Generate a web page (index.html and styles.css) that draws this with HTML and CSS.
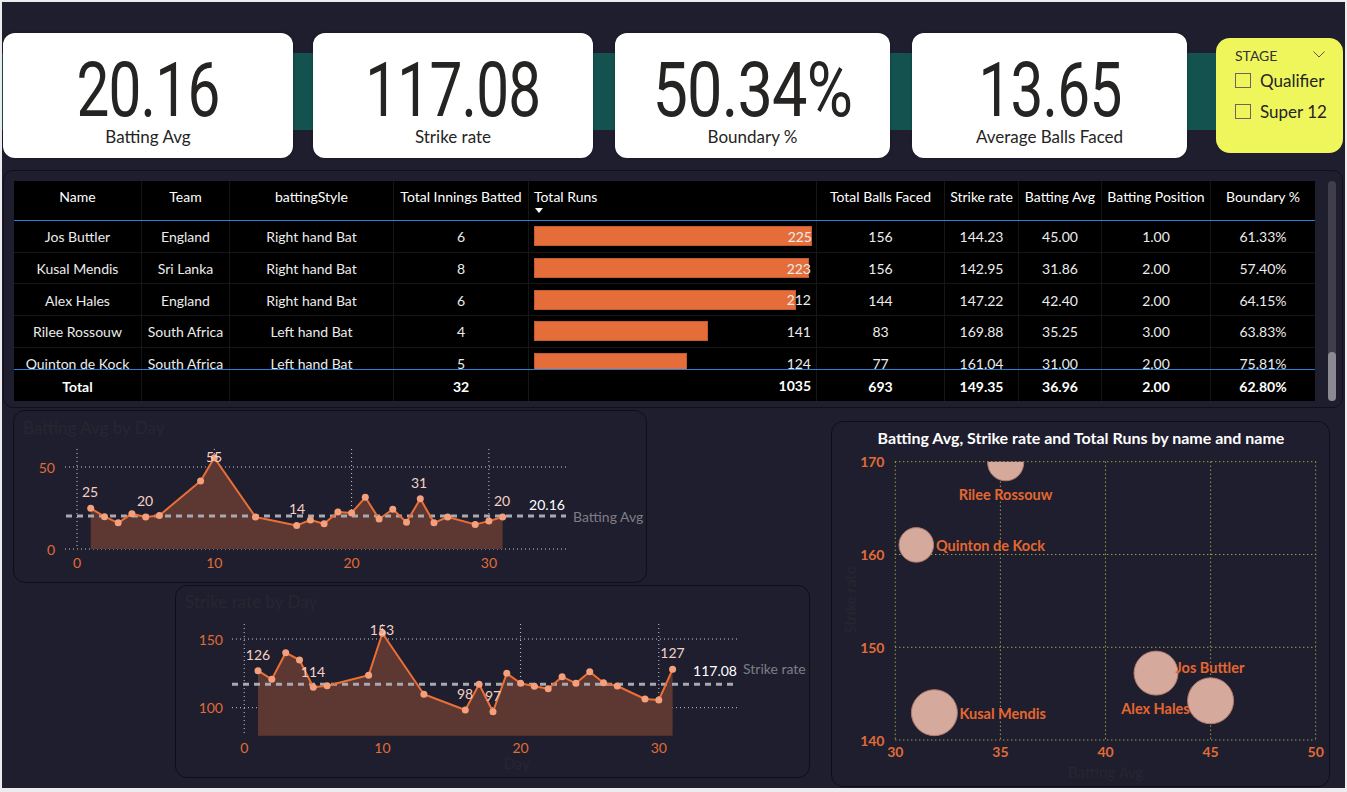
FILE: index.html
```html
<!DOCTYPE html>
<html>
<head>
<meta charset="utf-8">
<link rel="stylesheet" href="styles.css">
</head>
<body>
<div class="dash">
  <section class="kpis">
    <div class="card k1"><div class="num">20.16</div><div class="lbl">Batting Avg</div></div>
    <div class="card k2"><div class="num">117.08</div><div class="lbl">Strike rate</div></div>
    <div class="card k3"><div class="num">50.34%</div><div class="lbl">Boundary %</div></div>
    <div class="card k4"><div class="num">13.65</div><div class="lbl">Average Balls Faced</div></div>
    <div class="slicer">
      <div class="sl-head"><span>STAGE</span>
        <svg class="chev" width="12" height="7" viewBox="0 0 12 7"><path d="M0.5 0.5 L6 6 L11.5 0.5" fill="none" stroke="#555" stroke-width="1"/></svg>
      </div>
      <div class="opt"><span class="box"></span><span>Qualifier</span></div>
      <div class="opt"><span class="box"></span><span>Super 12</span></div>
    </div>
  </section>

  <section class="tpanel">
    <div class="table">
      <div class="trow head">
        <div class="c">Name</div>
        <div class="c">Team</div>
        <div class="c">battingStyle</div>
        <div class="c">Total Innings Batted</div>
        <div class="c runs-h">Total Runs<span class="sort"></span></div>
        <div class="c">Total Balls Faced</div>
        <div class="c">Strike rate</div>
        <div class="c">Batting Avg</div>
        <div class="c">Batting Position</div>
        <div class="c">Boundary %</div>
      </div>
      <div class="tbody">
        <div class="trow">
          <div class="c">Jos Buttler</div><div class="c">England</div><div class="c">Right hand Bat</div><div class="c">6</div>
          <div class="c runs"><span class="bar" style="width:278px"></span><span class="val">225</span></div>
          <div class="c">156</div><div class="c">144.23</div><div class="c">45.00</div><div class="c">1.00</div><div class="c">61.33%</div>
        </div>
        <div class="trow">
          <div class="c">Kusal Mendis</div><div class="c">Sri Lanka</div><div class="c">Right hand Bat</div><div class="c">8</div>
          <div class="c runs"><span class="bar" style="width:275px"></span><span class="val">223</span></div>
          <div class="c">156</div><div class="c">142.95</div><div class="c">31.86</div><div class="c">2.00</div><div class="c">57.40%</div>
        </div>
        <div class="trow">
          <div class="c">Alex Hales</div><div class="c">England</div><div class="c">Right hand Bat</div><div class="c">6</div>
          <div class="c runs"><span class="bar" style="width:262px"></span><span class="val">212</span></div>
          <div class="c">144</div><div class="c">147.22</div><div class="c">42.40</div><div class="c">2.00</div><div class="c">64.15%</div>
        </div>
        <div class="trow">
          <div class="c">Rilee Rossouw</div><div class="c">South Africa</div><div class="c">Left hand Bat</div><div class="c">4</div>
          <div class="c runs"><span class="bar" style="width:174px"></span><span class="val">141</span></div>
          <div class="c">83</div><div class="c">169.88</div><div class="c">35.25</div><div class="c">3.00</div><div class="c">63.83%</div>
        </div>
        <div class="trow">
          <div class="c">Quinton de Kock</div><div class="c">South Africa</div><div class="c">Left hand Bat</div><div class="c">5</div>
          <div class="c runs"><span class="bar" style="width:153px"></span><span class="val">124</span></div>
          <div class="c">77</div><div class="c">161.04</div><div class="c">31.00</div><div class="c">2.00</div><div class="c">75.81%</div>
        </div>
      </div>
      <div class="trow total">
        <div class="c">Total</div><div class="c"></div><div class="c"></div><div class="c">32</div>
        <div class="c runs"><span class="val">1035</span></div>
        <div class="c">693</div><div class="c">149.35</div><div class="c">36.96</div><div class="c">2.00</div><div class="c">62.80%</div>
      </div>
    </div>
    <div class="scroll"><div class="thumb"></div></div>
  </section>

  <section class="bottom">
    <div class="lines">
      <div class="panel p1">
        <svg class="chart" width="632" height="171" viewBox="1 1 632 171">
          <text class="ttl" x="10" y="17">Batting Avg by Day</text>
          <g class="grid">
            <line x1="52" x2="553" y1="57" y2="57"/>
            <line x1="52" x2="553" y1="139" y2="139"/>
            <line x1="64" x2="64" y1="39" y2="139"/>
            <line x1="201.3" x2="201.3" y1="39" y2="139"/>
            <line x1="338.6" x2="338.6" y1="39" y2="139"/>
            <line x1="475.9" x2="475.9" y1="39" y2="139"/>
          </g>
          <polygon class="area" points="77.7,139 77.7,98.3 91.5,106.7 105.2,112.8 118.9,103.7 132.7,107 146.4,105.4 187.6,70.9 201.3,47.7 242.5,107 283.7,115.4 297.4,110 311.1,113.7 324.9,102.1 338.6,102.9 352.3,87.3 366.1,109 379.8,99.3 393.5,112.3 407.3,88.7 421,112.8 434.7,107 462.2,114.4 475.9,111.1 489.6,107 489.6,139"/>
          <line class="avg" x1="53" x2="553" y1="105.9" y2="105.9"/>
          <polyline class="ln" points="77.7,98.3 91.5,106.7 105.2,112.8 118.9,103.7 132.7,107 146.4,105.4 187.6,70.9 201.3,47.7 242.5,107 283.7,115.4 297.4,110 311.1,113.7 324.9,102.1 338.6,102.9 352.3,87.3 366.1,109 379.8,99.3 393.5,112.3 407.3,88.7 421,112.8 434.7,107 462.2,114.4 475.9,111.1 489.6,107"/>
          <g class="pts">
            <circle cx="77.7" cy="98.3" r="3.5"/><circle cx="91.5" cy="106.7" r="3.5"/><circle cx="105.2" cy="112.8" r="3.5"/><circle cx="118.9" cy="103.7" r="3.5"/><circle cx="132.7" cy="107" r="3.5"/><circle cx="146.4" cy="105.4" r="3.5"/><circle cx="187.6" cy="70.9" r="3.5"/><circle cx="201.3" cy="47.7" r="3.5"/><circle cx="242.5" cy="107" r="3.5"/><circle cx="283.7" cy="115.4" r="3.5"/><circle cx="297.4" cy="110" r="3.5"/><circle cx="311.1" cy="113.7" r="3.5"/><circle cx="324.9" cy="102.1" r="3.5"/><circle cx="338.6" cy="102.9" r="3.5"/><circle cx="352.3" cy="87.3" r="3.5"/><circle cx="366.1" cy="109" r="3.5"/><circle cx="379.8" cy="99.3" r="3.5"/><circle cx="393.5" cy="112.3" r="3.5"/><circle cx="407.3" cy="88.7" r="3.5"/><circle cx="421" cy="112.8" r="3.5"/><circle cx="434.7" cy="107" r="3.5"/><circle cx="462.2" cy="114.4" r="3.5"/><circle cx="475.9" cy="111.1" r="3.5"/><circle cx="489.6" cy="107" r="3.5"/>
          </g>
          <g class="ylab">
            <text x="42" y="57">50</text>
            <text x="42" y="139">0</text>
          </g>
          <g class="xlab">
            <text x="64" y="152">0</text>
            <text x="201.3" y="152">10</text>
            <text x="338.6" y="152">20</text>
            <text x="475.9" y="152">30</text>
          </g>
          <g class="dlab">
            <text x="77" y="81">25</text>
            <text x="132" y="90">20</text>
            <text x="201" y="46">55</text>
            <text x="284" y="98">14</text>
            <text x="406" y="72">31</text>
            <text x="489" y="90">20</text>
          </g>
          <text class="avgv" x="534" y="94">20.16</text>
          <text class="avgn" x="560" y="106">Batting Avg</text>
        </svg>
      </div>
      <div class="panel p2">
        <svg class="chart" width="633" height="191" viewBox="1 1 633 191">
          <text class="ttl" x="10" y="16">Strike rate by Day</text>
          <g class="grid">
            <line x1="57" x2="563" y1="54" y2="54"/>
            <line x1="57" x2="563" y1="122.7" y2="122.7"/>
            <line x1="69.2" x2="69.2" y1="39" y2="150.7"/>
            <line x1="207.4" x2="207.4" y1="39" y2="150.7"/>
            <line x1="345.6" x2="345.6" y1="39" y2="150.7"/>
            <line x1="483.8" x2="483.8" y1="39" y2="150.7"/>
          </g>
          <polygon class="area" points="83,150.7 83,85.7 96.8,94.3 110.7,67.7 124.5,75 138.3,102.3 152.1,100.7 193.6,90.3 207.4,48.3 248.9,109.3 290.3,125 304.1,99.3 318,126.7 331.8,88.3 345.6,98.3 359.4,101.3 373.2,103.7 387.1,91.7 400.9,98.3 414.7,86.7 428.5,97.7 442.3,101 470,114 483.8,115 497.6,84.3 497.6,150.7"/>
          <line class="avg" x1="57" x2="563" y1="99.2" y2="99.2"/>
          <polyline class="ln" points="83,85.7 96.8,94.3 110.7,67.7 124.5,75 138.3,102.3 152.1,100.7 193.6,90.3 207.4,48.3 248.9,109.3 290.3,125 304.1,99.3 318,126.7 331.8,88.3 345.6,98.3 359.4,101.3 373.2,103.7 387.1,91.7 400.9,98.3 414.7,86.7 428.5,97.7 442.3,101 470,114 483.8,115 497.6,84.3"/>
          <g class="pts">
            <circle cx="83" cy="85.7" r="3.5"/><circle cx="96.8" cy="94.3" r="3.5"/><circle cx="110.7" cy="67.7" r="3.5"/><circle cx="124.5" cy="75" r="3.5"/><circle cx="138.3" cy="102.3" r="3.5"/><circle cx="152.1" cy="100.7" r="3.5"/><circle cx="193.6" cy="90.3" r="3.5"/><circle cx="207.4" cy="48.3" r="3.5"/><circle cx="248.9" cy="109.3" r="3.5"/><circle cx="290.3" cy="125" r="3.5"/><circle cx="304.1" cy="99.3" r="3.5"/><circle cx="318" cy="126.7" r="3.5"/><circle cx="331.8" cy="88.3" r="3.5"/><circle cx="345.6" cy="98.3" r="3.5"/><circle cx="359.4" cy="101.3" r="3.5"/><circle cx="373.2" cy="103.7" r="3.5"/><circle cx="387.1" cy="91.7" r="3.5"/><circle cx="400.9" cy="98.3" r="3.5"/><circle cx="414.7" cy="86.7" r="3.5"/><circle cx="428.5" cy="97.7" r="3.5"/><circle cx="442.3" cy="101" r="3.5"/><circle cx="470" cy="114" r="3.5"/><circle cx="483.8" cy="115" r="3.5"/><circle cx="497.6" cy="84.3" r="3.5"/>
          </g>
          <g class="ylab">
            <text x="48" y="54">150</text>
            <text x="48" y="122.7">100</text>
          </g>
          <g class="xlab">
            <text x="69.2" y="162.7">0</text>
            <text x="207.4" y="162.7">10</text>
            <text x="345.6" y="162.7">20</text>
            <text x="483.8" y="162.7">30</text>
          </g>
          <text class="atitle" x="342" y="178">Day</text>
          <g class="dlab">
            <text x="83" y="69">126</text>
            <text x="138" y="86">114</text>
            <text x="207" y="44">153</text>
            <text x="290" y="108">98</text>
            <text x="318" y="110">97</text>
            <text x="497.5" y="67">127</text>
          </g>
          <text class="avgv" x="540" y="85">117.08</text>
          <text class="avgn" x="568" y="83">Strike rate</text>
        </svg>
      </div>
    </div>
    <div class="panel scatter">
      <svg class="chart" width="497" height="364" viewBox="1 1 497 364">
        <defs>
          <clipPath id="plot"><rect x="64.3" y="40.7" width="420.4" height="278.3"/></clipPath>
        </defs>
        <text class="stitle" x="250" y="16">Batting Avg, Strike rate and Total Runs by name and name</text>
        <g class="sgrid">
          <line x1="64.3" x2="64.3" y1="40.7" y2="319"/>
          <line x1="169.4" x2="169.4" y1="40.7" y2="319"/>
          <line x1="274.5" x2="274.5" y1="40.7" y2="319"/>
          <line x1="379.6" x2="379.6" y1="40.7" y2="319"/>
          <line x1="484.7" x2="484.7" y1="40.7" y2="319"/>
          <line x1="64.3" x2="484.7" y1="40.7" y2="40.7"/>
          <line x1="64.3" x2="484.7" y1="133.5" y2="133.5"/>
          <line x1="64.3" x2="484.7" y1="226.3" y2="226.3"/>
          <line x1="64.3" x2="484.7" y1="319" y2="319"/>
        </g>
        <g class="bub" clip-path="url(#plot)">
          <circle cx="174.7" cy="41.8" r="18"/>
          <circle cx="85.3" cy="123.9" r="17.3"/>
          <circle cx="103.4" cy="291.7" r="23"/>
          <circle cx="325" cy="252.1" r="22"/>
          <circle cx="379.6" cy="279.8" r="23"/>
        </g>
        <g class="sylab">
          <text x="53.5" y="40.7">170</text>
          <text x="53.5" y="133.5">160</text>
          <text x="53.5" y="226.3">150</text>
          <text x="53.5" y="319">140</text>
        </g>
        <g class="sxlab">
          <text x="64.3" y="330">30</text>
          <text x="169.4" y="330">35</text>
          <text x="274.5" y="330">40</text>
          <text x="379.6" y="330">45</text>
          <text x="484.7" y="330">50</text>
        </g>
        <g class="blab">
          <text x="174.5" y="73.3" text-anchor="middle">Rilee Rossouw</text>
          <text x="105" y="124.3">Quinton de Kock</text>
          <text x="128.5" y="292.3">Kusal Mendis</text>
          <text x="344.6" y="246.7">Jos Buttler</text>
          <text x="358.7" y="287.3" text-anchor="end">Alex Hales</text>
        </g>
        <text class="atitle" x="274.7" y="351">Batting Avg</text>
        <text class="atitle" x="18.6" y="179" transform="rotate(-90 18.6 179)">Strike rate</text>
      </svg>
    </div>
  </section>
</div>
</body>
</html>
```
FILE: styles.css
```css
body {
  margin: 0;
  background: #ececef;
  font-family: Lato, "Noto Sans", sans-serif;
}

.dash {
  width: 1343px;
  height: 786px;
  margin: 2px 0 0 2px;
  background: #1f1e2e;
  overflow: hidden;
}

/* KPI row */
.kpis {
  display: flex;
  align-items: center;
  margin-top: 31px;
  height: 125px;
  padding-left: 1px;
  background: linear-gradient(#13524f, #13524f) no-repeat 0 20px / 1214px 77px;
}

.card {
  box-sizing: border-box;
  height: 125px;
  background: #ffffff;
  border-radius: 12px;
  display: flex;
  flex-direction: column;
  align-items: center;
  padding-top: 27px;
  color: #252423;
  box-shadow: 0 0 3px rgba(0, 0, 0, 0.3);
}

.k1 { width: 290px; }
.k2 { width: 280px; margin-left: 20px; }
.k3 { width: 275px; margin-left: 22px; }
.k4 { width: 275px; margin-left: 22px; }

.num {
  font-family: Roboto, "Liberation Sans", sans-serif;
  font-size: 76px;
  line-height: 60px;
  letter-spacing: -1px;
  transform: scaleX(0.77);
}

.k3 .num { transform: scaleX(0.83); }

.lbl {
  font-size: 17px;
  line-height: 20px;
  margin-top: 7px;
}

.slicer {
  box-sizing: border-box;
  width: 127px;
  height: 115px;
  margin-left: 29px;
  background: #eef65c;
  border-radius: 14px;
  padding: 9px 18px 0 19px;
  color: #252423;
}

.sl-head {
  display: flex;
  justify-content: space-between;
  align-items: center;
  font-size: 14px;
  line-height: 18px;
  color: #333333;
}

.chev { margin-top: -4px; }

.opt {
  display: flex;
  align-items: center;
  gap: 9px;
  height: 31px;
  font-size: 17px;
  white-space: nowrap;
}

.box {
  width: 16px;
  height: 15px;
  border: 1px solid #666666;
  box-sizing: border-box;
  flex: none;
}

/* Table panel */
.tpanel {
  box-sizing: border-box;
  display: flex;
  align-items: flex-start;
  width: 1340px;
  height: 238px;
  margin: 12px 0 0 1px;
  padding: 10px 6px 0 10px;
  border: 1px solid #11101a;
  border-radius: 10px;
}

.table {
  width: 1301px;
  height: 220px;
  background: #000000;
  color: #ececec;
  font-size: 14px;
}

.trow {
  display: grid;
  grid-template-columns: 127px 88px 164px 135px 288px 128px 74px 83px 109px 105px;
  box-sizing: border-box;
  height: 31.7px;
  border-bottom: 1px solid #161616;
}

.c {
  display: flex;
  align-items: center;
  justify-content: center;
  border-left: 1px solid #161616;
  white-space: nowrap;
  overflow: hidden;
  padding-top: 1px;
}

.c:first-child { border-left: none; }

.head {
  height: 40px;
  border-bottom: 1px solid #2a80d4;
  color: #ffffff;
}

.head .c {
  align-items: flex-start;
  padding-top: 7px;
  line-height: 18px;
}

.head .runs-h {
  justify-content: flex-start;
  flex-direction: column;
  padding-left: 5px;
}

.sort {
  width: 0;
  height: 0;
  margin: 2px 0 0 1px;
  border-left: 4px solid transparent;
  border-right: 4px solid transparent;
  border-top: 5px solid #ffffff;
}

.tbody {
  height: 149px;
  box-sizing: border-box;
  border-bottom: 1px solid #2a80d4;
  overflow: hidden;
}

.runs {
  display: grid;
  align-items: center;
  justify-content: stretch;
  padding: 0 5px 0 5px;
}

.bar {
  grid-area: 1 / 1;
  justify-self: start;
  height: 20px;
  background: #e56d3a;
  box-sizing: border-box;
  border: 1px solid #c45a2e;
}

.val {
  grid-area: 1 / 1;
  justify-self: end;
  position: relative;
}

.total {
  height: 31px;
  border-bottom: none;
  font-weight: bold;
  color: #ffffff;
}

.scroll {
  display: flex;
  flex-direction: column;
  justify-content: flex-end;
  width: 8px;
  height: 220px;
  margin-left: 13px;
  background: #3f3e4a;
  border-radius: 4px;
}

.thumb {
  height: 49px;
  background: #8b8a93;
  border-radius: 4px;
}

/* Bottom charts */
.bottom {
  display: flex;
  align-items: flex-start;
}

.lines {
  width: 808px;
  display: flex;
  flex-direction: column;
}

.panel {
  box-sizing: border-box;
  border: 1px solid #0f0e17;
  border-radius: 12px;
  background: #1f1e2e;
}

.p1 {
  width: 634px;
  height: 173px;
  margin: 2px 0 0 11px;
}

.p2 {
  width: 635px;
  height: 193px;
  margin: 2px 0 0 173px;
}

.scatter {
  width: 499px;
  height: 366px;
  margin: 13px 0 0 21px;
}

.chart {
  display: block;
  font-family: Lato, "Noto Sans", sans-serif;
}

.ttl {
  font-size: 17px;
  fill: #272631;
  dominant-baseline: central;
}

.grid line {
  stroke: #c9c9cf;
  stroke-width: 1;
  stroke-dasharray: 1 3;
}

.area { fill: #5d3731; }

.ln {
  fill: none;
  stroke: #ea6f35;
  stroke-width: 2;
  stroke-linejoin: round;
}

.pts circle { fill: #f4a07c; }

.avg {
  stroke: #a9a9b1;
  stroke-width: 3;
  stroke-dasharray: 6 5;
}

.ylab text {
  font-size: 14px;
  fill: #e06c36;
  text-anchor: end;
  dominant-baseline: central;
}

.xlab text {
  font-size: 14px;
  fill: #e06c36;
  text-anchor: middle;
  dominant-baseline: central;
}

.dlab text {
  font-size: 14px;
  fill: #f3d2c4;
  text-anchor: middle;
  dominant-baseline: central;
}

.avgv {
  font-size: 14px;
  fill: #ffffff;
  text-anchor: middle;
  dominant-baseline: central;
}

.avgn {
  font-size: 14px;
  fill: #7e7d86;
  dominant-baseline: central;
}

.atitle {
  font-size: 15px;
  fill: #272631;
  text-anchor: middle;
  dominant-baseline: central;
}

.stitle {
  font-size: 16px;
  font-weight: bold;
  fill: #ffffff;
  text-anchor: middle;
  dominant-baseline: central;
}

.sgrid line {
  stroke: #d4d846;
  stroke-width: 1;
  stroke-dasharray: 1 3;
}

.bub circle {
  fill: #d5a99b;
  stroke: #b07a6c;
  stroke-width: 1;
}

.sylab text {
  font-size: 14px;
  font-weight: bold;
  fill: #e06c36;
  text-anchor: end;
  dominant-baseline: central;
}

.sxlab text {
  font-size: 14px;
  font-weight: bold;
  fill: #e06c36;
  text-anchor: middle;
  dominant-baseline: central;
}

.blab text {
  font-size: 14.5px;
  font-weight: bold;
  fill: #e5672f;
  dominant-baseline: central;
}
```
